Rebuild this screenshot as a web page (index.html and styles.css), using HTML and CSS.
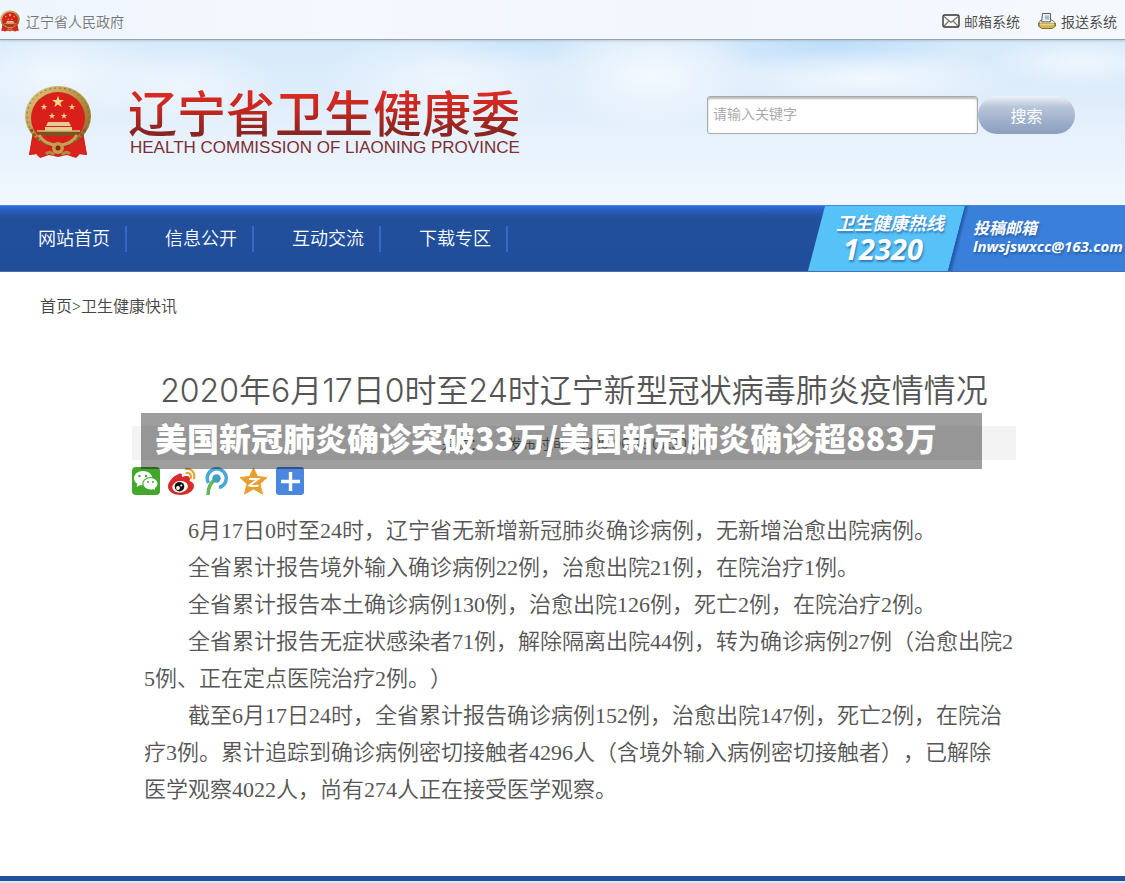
FILE: index.html
```html
<!DOCTYPE html>
<html lang="zh-CN">
<head>
<meta charset="utf-8">
<meta name="viewport" content="width=device-width, initial-scale=1">
<title>辽宁省卫生健康委</title>
<link rel="stylesheet" href="styles.css">
</head>
<body>
<svg class="sprite" aria-hidden="true">
  <defs>
    <linearGradient id="gold" x1="0" y1="0" x2="1" y2="1">
      <stop offset="0" stop-color="#e6cf8c"/><stop offset=".5" stop-color="#b39245"/><stop offset="1" stop-color="#8a6526"/>
    </linearGradient>
    <polygon id="star" points="0,-10 2.4,-3.2 9.5,-3.1 3.8,1.2 5.9,8.1 0,4 -5.9,8.1 -3.8,1.2 -9.5,-3.1 -2.4,-3.2"/>
    <symbol id="emblem" viewBox="0 0 68 74">
      <path d="M9 46 5 70l8-1 3 4 9-3 9 2 9-2 9 3 3-4 8 1-4-24z" fill="#d3211c"/>
      <ellipse cx="34" cy="31" rx="33" ry="30" fill="url(#gold)"/>
      <ellipse cx="34" cy="31" rx="31" ry="28" fill="none" stroke="#8f6c2b" stroke-width="1" stroke-dasharray="2 3"/>
      <ellipse cx="34" cy="33" rx="27" ry="26" fill="#d91f1a"/>
      <path d="M7 44c3 8 10 14 19 16M61 44c-3 8-10 14-19 16" stroke="#8a5a22" stroke-width="3" stroke-dasharray="3 2" fill="none"/>
      <path d="M24 37h21l2 4H22zM21 42h27v4H21z" fill="#e4cb91"/>
      <path d="M13 46h43l-3 5H16z" fill="#81501f"/>
      <path d="M13 46h43" stroke="#d9bc75" stroke-width="1.500"/>
      <path d="M15 50c4 7 10 10 19 10s15-3 19-10" stroke="#c5a255" stroke-width="3" fill="none"/>
      <path d="M8 55c6 1 12 3 16 8l-4 8-5 1-3-3-7 1zM60 55c-6 1-12 3-16 8l4 8 5 1 3-3 7 1z" fill="#d8241d"/>
      <circle cx="34" cy="63" r="6" fill="#c49c4a"/><circle cx="34" cy="63" r="2.500" fill="#8c2416"/>
      <path d="M22 69q4-4 8 1M46 69q-4-4-8 1" stroke="#b38a3d" stroke-width="3" fill="none"/>
      <g fill="#f0d586">
        <use href="#star" transform="translate(34 17) scale(.62)"/>
        <use href="#star" transform="translate(20 22) scale(.34)"/>
        <use href="#star" transform="translate(48 22) scale(.34)"/>
        <use href="#star" transform="translate(28 31) scale(.34)"/>
        <use href="#star" transform="translate(40 31) scale(.34)"/>
      </g>
    </symbol>
  </defs>
</svg>

<header class="masthead">
  <div class="topbar">
    <a class="gov" href="#"><svg class="gov-icon" aria-hidden="true"><use href="#emblem"/></svg>辽宁省人民政府</a>
    <nav class="systems" aria-label="系统入口">
      <a class="system" href="#">
        <svg width="18" height="14" viewBox="0 0 18 14" aria-hidden="true"><rect x="1" y="1" width="16" height="12" rx="1.500" fill="#f8f8f6" stroke="#333" stroke-width="1.400"/><path d="M2 2.500 9 8.500 16 2.500M2 12l5-5M16 12l-5-5" fill="none" stroke="#777" stroke-width="1.200"/></svg>邮箱系统</a>
      <a class="system" href="#">
        <svg width="20" height="18" viewBox="0 0 20 18" aria-hidden="true"><path d="M5.500 1.500h8V10h-9z" fill="#e8eef4" stroke="#555b63"/><path d="M8 3.500h4v4H8z" fill="#a8bacb"/><path d="M4 8 1.500 11v3h17v-3L15 8h-1.500v2h-9V8z" fill="#eee8ca" stroke="#777"/><path d="M2 11.500h16v3l-3 2H5l-3-2z" fill="#d8b94d" stroke="#817139"/><path d="M3 12h14" stroke="#faf0b6"/></svg>报送系统</a>
    </nav>
  </div>
  <div class="banner">
    <a class="brand" href="#">
      <svg class="brand-icon" aria-hidden="true"><use href="#emblem"/></svg>
      <span class="brand-text">
        <span class="brand-cn">辽宁省卫生健康委</span>
        <span class="brand-en">HEALTH COMMISSION OF LIAONING PROVINCE</span>
      </span>
    </a>
    <form class="search">
      <input class="search-box" type="text" placeholder="请输入关键字" aria-label="请输入关键字">
      <button class="search-button" type="button">搜索</button>
    </form>
  </div>
</header>

<div class="mainbar">
  <nav class="menu" aria-label="主导航">
    <a href="#">网站首页</a>
    <a href="#">信息公开</a>
    <a href="#">互动交流</a>
    <a href="#">下载专区</a>
  </nav>
  <div class="hotline"><span class="hotline-name">卫生健康热线</span><span class="hotline-number">12320</span></div>
  <div class="mailbox"><span>投稿邮箱</span><a href="#">lnwsjswxcc@163.com</a></div>
</div>

<main>
  <nav class="crumbs" aria-label="当前位置"><a href="#">首页</a>&gt;<a href="#">卫生健康快讯</a></nav>
  <article class="article">
    <h1 class="title">2020年6月17日0时至24时辽宁新型冠状病毒肺炎疫情情况</h1>
    <div class="meta">
      <span>来源：</span><span>发布时间：2020-06-18 07:30:00</span>
      <div class="caption">美国新冠肺炎确诊突破33万/美国新冠肺炎确诊超883万</div>
    </div>
    <div class="share">
      <a href="#" aria-label="微信"><svg viewBox="0 0 28 28"><rect width="28" height="28" rx="4" fill="#45a62c"/><path d="M11 4c-5 0-9 3.200-9 7.200 0 2.400 1.300 4.300 3.300 5.600L4.600 20l3.500-1.900c1 .2 2 .4 3 .4 5 0 9-3.200 9-7.300S16 4 11 4z" fill="#fff"/><path d="M18.500 10.500c-4.300 0-7.700 2.900-7.700 6.300s3.400 6.300 7.700 6.300c.9 0 1.800-.1 2.600-.4l3.100 1.700-.8-2.800c1.700-1.200 2.700-2.900 2.700-4.800 0-3.400-3.400-6.300-7.600-6.300z" fill="#fff" stroke="#45a62c" stroke-width="1.200"/><g fill="#45a62c"><circle cx="7.500" cy="9" r="1.200"/><circle cx="14" cy="9" r="1.200"/><circle cx="16" cy="15" r="1"/><circle cx="21" cy="15" r="1"/></g></svg></a>
      <a href="#" aria-label="微博"><svg viewBox="0 0 28 28"><path d="M10.500 7C5.500 9 0 14.500 0 19.500 0 24.500 5.800 28 12.500 28 20 28 26 23.800 26 19c0-2.700-2-4.300-4.400-5 .8-2.200.4-4-1.200-4.700-1.600-.7-4-.3-6.500.8.7-2.600-.4-4.300-3.400-3.100z" fill="#d52b2a"/><ellipse cx="12" cy="19.800" rx="7.800" ry="5.800" transform="rotate(-8 12 19)" fill="#fff"/><circle cx="11.500" cy="19.700" r="4.800" fill="#111"/><circle cx="10" cy="21" r="1.900" fill="#fff"/><circle cx="13.300" cy="18.500" r="1" fill="#fff"/><path d="M18 2c5-1.200 9.500 3.600 8 9.500M18.500 6c3-.6 5.200 1.700 4.300 5" fill="none" stroke="#e9a53a" stroke-width="2.200" stroke-linecap="round"/></svg></a>
      <a href="#" aria-label="腾讯微博"><svg viewBox="0 0 28 28"><path d="M4.500 16A9.500 9.500 0 1 1 15 20.500" fill="none" stroke="#4aa7db" stroke-width="3.500"/><path d="M12 12C7 15 4 20 4 28" fill="none" stroke="#67b657" stroke-width="3.500"/><circle cx="12.500" cy="11.500" r="4.200" fill="#3f9fc4"/></svg></a>
      <a href="#" aria-label="QQ空间"><svg viewBox="0 0 28 28"><path d="m13.500 1 4 8.500 9.500 1-7 6.500 2.500 10-9-5-9 5L7 17 0 10.500l9.500-1z" fill="#e7a02f" stroke="#e7a02f" stroke-linejoin="round"/><path d="M9 12h9l-8.500 6.500c3 .7 6 .8 9 0" fill="none" stroke="#fff" stroke-width="2"/></svg></a>
      <a href="#" aria-label="更多分享"><svg viewBox="0 0 28 28"><rect width="28" height="28" rx="3" fill="#4b86df"/><path d="M14.500 5v19M5 14.500h19" stroke="#fff" stroke-width="3.400"/></svg></a>
    </div>
    <div class="story">
      <p>6月17日0时至24时，辽宁省无新增新冠肺炎确诊病例，无新增治愈出院病例。</p>
      <p>全省累计报告境外输入确诊病例22例，治愈出院21例，在院治疗1例。</p>
      <p>全省累计报告本土确诊病例130例，治愈出院126例，死亡2例，在院治疗2例。</p>
      <p>全省累计报告无症状感染者71例，解除隔离出院44例，转为确诊病例27例（治愈出院25例、正在定点医院治疗2例。）</p>
      <p>截至6月17日24时，全省累计报告确诊病例152例，治愈出院147例，死亡2例，在院治疗3例。累计追踪到确诊病例密切接触者4296人（含境外输入病例密切接触者），已解除<br>医学观察4022人，尚有274人正在接受医学观察。</p>
    </div>
  </article>
</main>
<footer class="footer"></footer>
</body>
</html>
```
FILE: styles.css
```css
* { box-sizing: border-box; }

body {
  margin: 0;
  background: #fff;
  color: #555;
  font-family: "Noto Sans CJK SC", sans-serif;
  font-weight: 350;
  text-spacing-trim: space-all;
  overflow-x: hidden;
}

a { color: inherit; text-decoration: none; }
.sprite { position: absolute; width: 0; height: 0; }

/* Masthead with a soft sky behind it */
.masthead {
  background:
    radial-gradient(ellipse 110px 50px at 5% 75px, #f4f9fee0, #f4f9fe00),
    radial-gradient(ellipse 100px 40px at 16% 85px, #f4f9fec0, #f4f9fe00),
    radial-gradient(ellipse 130px 50px at 40% 80px, #f4f9fec0, #f4f9fe00),
    radial-gradient(ellipse 110px 55px at 58% 75px, #f6fafff0, #f6faff00),
    radial-gradient(ellipse 150px 30px at 77% 78px, #f4f9fee0, #f4f9fe00),
    radial-gradient(ellipse 90px 25px at 96% 62px, #f4f9fed0, #f4f9fe00),
    radial-gradient(ellipse 130px 35px at 74% 44px, #bedefa, #bedefa00),
    radial-gradient(ellipse 90px 25px at 45% 44px, #c8e3fb, #c8e3fb00),
    linear-gradient(#d6eafb 40px, #dfedfb 100px, #e9f3fd 150px, #f1f7fe 205px);
}

.topbar {
  display: flex;
  justify-content: space-between;
  align-items: center;
  height: 40px;
  padding: 3px 8px 0 0;
  border-bottom: 1px solid #96a1ac;
  background: linear-gradient(90deg, #eef5fd, #f5f8fe 30%, #f2f7fe 60%, #f5f9fe);
  box-shadow: 0 1px 2px #8fa5b880;
  font-size: 14px;
  line-height: 20px;
}
.gov { display: flex; align-items: center; gap: 6px; color: #777; }
.gov-icon { width: 20px; height: 22px; }
.systems { display: flex; gap: 17px; color: #444; }
.system { display: flex; align-items: center; gap: 4px; }

.banner {
  display: flex;
  justify-content: space-between;
  align-items: flex-start;
  height: 165px;
  padding: 45px 50px 0 24px;
}
.brand { display: flex; gap: 36px; }
.brand-icon { width: 68px; height: 74px; }
.brand-text { display: flex; flex-direction: column; gap: 2px; }
.brand-cn {
  font-size: 49px;
  font-weight: 500;
  line-height: 52px;
  background: linear-gradient(#d92b23 15%, #c1271f 50%, #8a2522 90%);
  background-clip: text;
  color: transparent;
}
.brand-en {
  padding-left: 2px;
  color: #7c2d31;
  font: 17px/18px "Liberation Sans", sans-serif;
}

.search { display: flex; padding-top: 11px; }
.search-box {
  width: 271px;
  height: 38px;
  padding: 0 5px 5px;
  border: 1px solid #aaa;
  border-radius: 3px;
  background: #fff;
  box-shadow: inset 0 2px 2px #bbb;
  font: 350 14px/20px "Noto Sans CJK SC", sans-serif;
}
.search-box::placeholder { color: #a5a5a5; }
.search-button {
  width: 97px;
  height: 38px;
  padding: 0;
  border: 0;
  border-radius: 19px;
  background: linear-gradient(#eef3f9, #b9c6da 28%, #a5b6cf 55%, #8c9dbd);
  color: #fff;
  font: 16px/20px "Noto Sans CJK SC", sans-serif;
}

/* Main navigation bar */
.mainbar {
  display: flex;
  height: 67px;
  border-top: 1px solid #4a83dc;
  border-bottom: 1px solid #4a6fae;
  background: linear-gradient(#2d6bdb, #2559b2 7px, #214f9b 12px, #204e9a);
  color: #fff;
}
.menu { display: flex; flex: 1; align-items: center; }
.menu a {
  width: 127px;
  padding: 0 0 4px 38px;
  border-right: 2px solid #3568cb;
  font-size: 18px;
  line-height: 22px;
}
.hotline,
.mailbox {
  display: flex;
  flex-direction: column;
  font-weight: 700;
  font-style: italic;
  text-shadow: 1px 2px 2px #1b4b8c99;
}
.hotline {
  width: 157px;
  padding: 3px 0 0 28px;
  clip-path: polygon(17px 0, 100% 0, 140px 100%, 0 100%);
  background: #57c2f8;
  font-size: 18px;
  line-height: 26px;
}
.hotline-number { padding-left: 7px; font-family: "Open Sans", sans-serif; font-size: 29px; line-height: 28px; }
.mailbox {
  width: 177px;
  margin-left: -17px;
  padding: 11px 0 0 25px;
  clip-path: polygon(17px 0, 100% 0, 100% 100%, 0 100%);
  background: linear-gradient(104deg, #245caf 17px, #3a7fda 21px);
  font-size: 16px;
  line-height: 20px;
}
.mailbox a { font-family: "Open Sans", sans-serif; font-size: 15px; line-height: 18px; }

.crumbs {
  padding: 23px 40px 0;
  color: #444;
  font: 350 16px/24px "Liberation Serif", "Noto Sans CJK SC", serif;
}

/* Article */
.article { margin: 0 109px 0 132px; }
.title {
  margin: 0;
  padding: 48px 0 11px;
  color: #555;
  font: 350 32px/48px Inter, "Noto Sans CJK SC", sans-serif;
  text-align: center;
}
.meta {
  position: relative;
  display: flex;
  justify-content: center;
  gap: 24px;
  height: 34px;
  background: #f3f3f3;
  color: #666;
  font-size: 14px;
  line-height: 34px;
}
.caption {
  position: absolute;
  top: -13px;
  left: 9px;
  right: 34px;
  height: 56px;
  padding-left: 14px;
  background: rgb(0 0 0 / 38%);
  color: #fff;
  font-size: 32px;
  font-weight: 900;
  line-height: 48px;
  white-space: nowrap;
}
.share { display: flex; gap: 8px; padding-top: 7px; }
.share a { width: 28px; height: 28px; }
.share svg { display: block; width: 28px; height: 28px; }

.story {
  padding: 17px 0 0 12px;
  color: #555;
  font: 350 22px/37px "Liberation Serif", "Noto Sans CJK SC", serif;
  word-break: break-all;
}
.story p { margin: 0; text-indent: 2em; }

.footer {
  margin-top: 68px;
  height: 7px;
  border-top: 5px solid #214f9b;
  background: #dce9f8;
}
```
